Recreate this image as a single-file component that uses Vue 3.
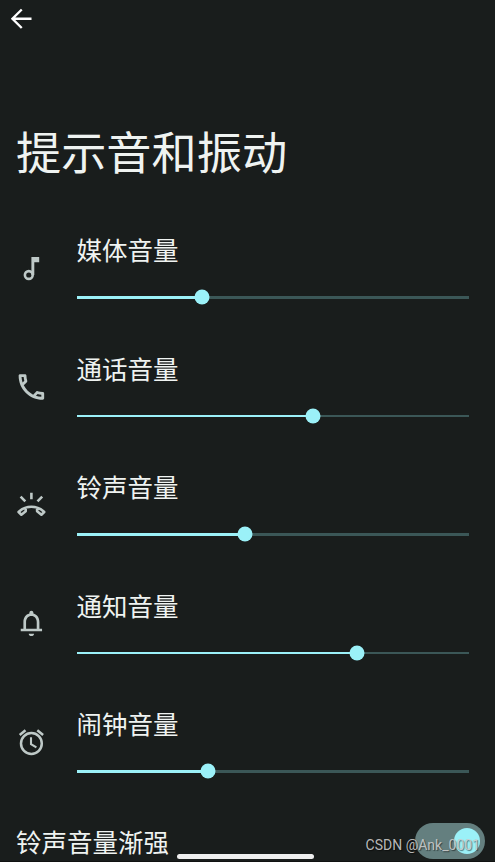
<template>
    <div class="screen">
        <header class="topbar">
            <svg class="back" viewBox="0 0 22 22">
                <path d="M21 11H2M11 1.5L1.5 11L11 20.5" />
            </svg>
        </header>
        <h1>提示音和振动</h1>
        <ul class="volumes">
            <li v-for="item in volumes" :key="item.name" class="volume">
                <svg class="icon" viewBox="0 0 34 34">
                    <g v-if="item.icon == 'music'" fill="none">
                        <circle cx="14.8" cy="24" r="3.9" stroke-width="2.6" />
                        <path class="solid" d="M17.4 6h7.8v5.2h-4.9v12.8h-2.9z" />
                    </g>
                    <path v-else-if="item.icon == 'phone'" class="solid" transform="translate(.4 0) scale(1.417)"
                        d="M6.54 5c.06.89.21 1.76.45 2.59l-1.2 1.2c-.41-1.2-.67-2.47-.76-3.79h1.51m9.86 12.02c.85.24 1.72.39 2.6.45v1.49c-1.32-.09-2.59-.35-3.8-.75l1.2-1.19M7.5 3H4c-.55 0-1 .45-1 1 0 9.39 7.61 17 17 17 .55 0 1-.45 1-1v-3.49c0-.55-.45-1-1-1-1.24 0-2.45-.2-3.57-.57-.1-.04-.21-.05-.31-.05-.26 0-.51.1-.71.29l-2.2 2.2c-2.83-1.45-5.15-3.76-6.59-6.59l2.2-2.2c.28-.28.36-.67.25-1.02C8.7 6.45 8.5 5.25 8.5 4c0-.55-.45-1-1-1z" />
                    <g v-else-if="item.icon == 'ring'" fill="none" stroke-width="2.6" transform="translate(.4 0)">
                        <path d="M17 4.7v6.5M6.2 8.6l4.7 4.7M27.8 8.6l-4.7 4.7" />
                        <path stroke-linejoin="round" d="M11.3 19.8v3.5L7 26.7L4.2 24C11 17 23 17 29.8 24L27 26.7L22.7 23.3v-3.5" />
                    </g>
                    <path v-else-if="item.icon == 'bell'" class="solid" transform="translate(1.4 1.7) scale(1.333)"
                        d="M12 20.5c1.1 0 2-.7 2-1.8h-4c0 1.1.9 1.8 2 1.8zm6-5.5v-5c0-3.07-1.63-5.64-4.5-6.32V3c0-.83-.67-1.5-1.5-1.5s-1.5.67-1.5 1.5v.68C7.64 4.36 6 6.92 6 10v5H4v2h16v-2h-2zm-2 0H8v-5c0-2.48 1.51-4.5 4-4.5s4 2.02 4 4.5v5z" />
                    <g v-else fill="none" stroke-width="2.5" transform="translate(.4 .2)">
                        <circle cx="17" cy="18.3" r="10.4" />
                        <path stroke-width="2.1" d="M16.6 12v7l5.4 3.2" />
                        <path d="M5.3 9.8l5.8-4.8M28.7 9.8l-5.8-4.8" />
                    </g>
                </svg>
                <div class="control">
                    <label>{{ item.name }}</label>
                    <div class="track">
                        <div class="filled" :style="{ width: item.value + '%' }"></div>
                        <div class="thumb" :style="{ left: item.value + '%' }"></div>
                    </div>
                </div>
            </li>
        </ul>
        <div class="ascending">
            <span>铃声音量渐强</span>
            <div class="switch"><div class="knob"></div></div>
        </div>
        <div class="homebar"></div>
        <div class="watermark">CSDN @Ank_0001</div>
    </div>
</template>

<script setup>
    import {ref} from 'vue'

    const volumes = ref([
        {name: "媒体音量", icon: "music", value: 32},
        {name: "通话音量", icon: "phone", value: 60.1},
        {name: "铃声音量", icon: "ring", value: 42.9},
        {name: "通知音量", icon: "bell", value: 71.5},
        {name: "闹钟音量", icon: "alarm", value: 33.3}
    ])
</script>

<style>
    body {
        margin: 0;
        background: #191d1c;
    }
</style>

<style scoped>
    .screen {
        position: relative;
        box-sizing: border-box;
        width: 495px;
        height: 862px;
        overflow: hidden;
        background: #191d1c;
        border-bottom: 1px solid #101211;
        color: #eff3f1;
        font-family: "Noto Sans CJK SC", sans-serif;
    }

    .topbar {
        height: 98px;
        padding: 8px 0 0 11px;
    }

    .back {
        display: block;
        width: 21.5px;
        height: 21.5px;
        fill: none;
        stroke: #fff;
        stroke-width: 2.4;
    }

    h1 {
        margin: 0;
        padding-left: 16px;
        height: 104px;
        line-height: 90px;
        font-size: 45.2px;
        font-weight: 400;
    }

    .volumes {
        list-style: none;
        margin: 0;
        padding: 0;
    }

    .volume {
        display: flex;
        height: 118.5px;
    }

    .icon {
        width: 34px;
        height: 34px;
        margin: 41.4px 29px 0 14px;
        flex-shrink: 0;
        stroke: #bec9c7;
    }

    .solid {
        fill: #bec9c7;
        stroke: none;
    }

    .control {
        width: 392px;
        padding-top: 18px;
    }

    label {
        display: block;
        height: 68px;
        margin-left: -0.4px;
        line-height: 42px;
        font-size: 25.5px;
    }

    .track {
        position: relative;
        height: 2.5px;
        background: #3b5757;
    }

    .filled {
        height: 100%;
        background: #9bf1f8;
    }

    .thumb {
        position: absolute;
        top: 50%;
        width: 15px;
        height: 15px;
        border-radius: 50%;
        background: #9bf1f8;
        transform: translate(-50%, -50%);
    }

    .ascending {
        display: flex;
        justify-content: space-between;
        align-items: center;
        height: 77px;
        padding: 0 10px 0 16px;
        line-height: 40px;
        font-size: 25.5px;
    }

    .switch {
        display: flex;
        align-items: center;
        justify-content: flex-end;
        box-sizing: border-box;
        width: 70px;
        height: 36px;
        padding-right: 5px;
        border-radius: 18px;
        background: #647f7f;
    }

    .knob {
        width: 26px;
        height: 26px;
        border-radius: 50%;
        background: #9bf1f8;
    }

    .homebar {
        position: absolute;
        left: 177px;
        bottom: 2px;
        width: 137px;
        height: 5px;
        border-radius: 3px;
        background: #efefef;
    }

    .watermark {
        position: absolute;
        right: 15px;
        bottom: 7px;
        line-height: 18px;
        font-family: Roboto, "Liberation Sans", sans-serif;
        font-size: 14px;
        color: rgba(205, 205, 205, 0.9);
        text-shadow: 1px 1px 1px rgba(0, 0, 0, 0.5);
    }
</style>
